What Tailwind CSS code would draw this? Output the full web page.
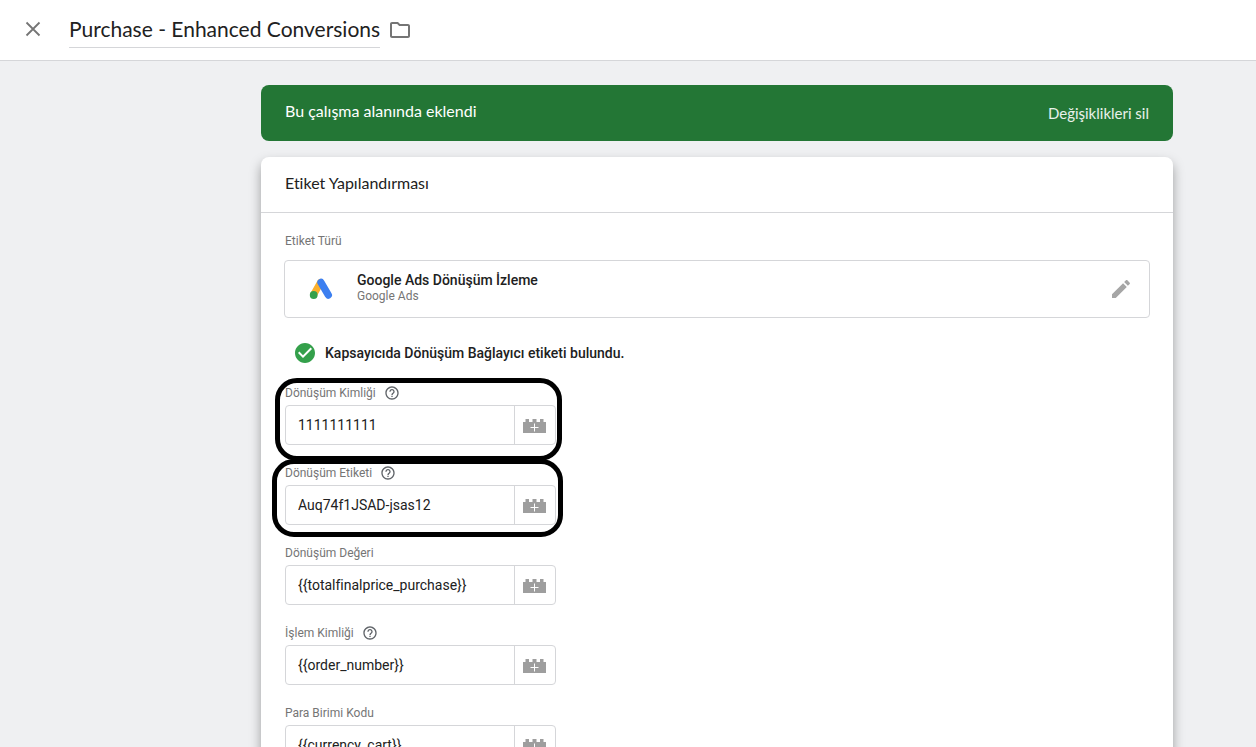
<!DOCTYPE html>
<html lang="tr">
<head>
  <meta charset="UTF-8">
  <meta name="viewport" content="width=device-width, initial-scale=1.0">
  <title>Purchase - Enhanced Conversions</title>
  <script src="https://cdn.jsdelivr.net/npm/@tailwindcss/browser@4"></script>
</head>
<body class="h-screen flex flex-col overflow-hidden bg-[#eff0f2] font-[Roboto,sans-serif] text-[#212121] [font-variant-ligatures:none]">

  <!-- shared icons -->
  <svg class="hidden">
    <symbol id="icon-help" viewBox="0 0 24 24">
      <path fill="currentColor" d="M11 18h2v-2h-2v2zm1-16C6.48 2 2 6.48 2 12s4.48 10 10 10 10-4.48 10-10S17.52 2 12 2zm0 18c-4.41 0-8-3.59-8-8s3.59-8 8-8 8 3.59 8 8-3.59 8-8 8zm0-14c-2.21 0-4 1.79-4 4h2c0-1.1.9-2 2-2s2 .9 2 2c0 2-3 1.75-3 5h2c0-2.25 3-2.5 3-5 0-2.21-1.79-4-4-4z"/>
    </symbol>
    <symbol id="icon-brick" viewBox="0 0 23 14">
      <path fill="#9e9e9e" d="M0 3h2.500V0h3.500v3h3.500V0h4v3H17V0h3.500v3H23v11H0z"/>
      <path stroke="#fff" stroke-width="1" d="M11.500 4.500v8M7.500 8.500h8"/>
    </symbol>
  </svg>

  <header class="shrink-0 flex items-center h-[61px] pl-6 pb-0.5 bg-white border-b border-[#d5d6d9]">
    <button type="button" aria-label="Kapat" class="text-[#757575]">
      <svg class="w-[18px] h-[18px]" viewBox="0 0 18 18" fill="none" stroke="currentColor" stroke-width="1.800"><path d="M2.500 2.500l13 13M15.500 2.500l-13 13"/></svg>
    </button>
    <h1 class="ml-[27px] mt-1 pt-0.5 h-[33px] border-b border-[#d5d6d9] font-[Lato,sans-serif] text-[21px] leading-6">Purchase - Enhanced Conversions</h1>
    <button type="button" aria-label="Klasör" class="ml-2 mt-0.5 text-[#757575]">
      <svg class="w-6 h-6" viewBox="0 0 24 24" fill="currentColor"><path d="M9.170 6l2 2H20v10H4V6h5.170M10 4H4c-1.100 0-1.990.900-1.990 2L2 18c0 1.100.900 2 2 2h16c1.100 0 2-.900 2-2V8c0-1.100-.900-2-2-2h-8l-2-2z"/></svg>
    </button>
  </header>

  <main class="flex-1 min-h-0 overflow-hidden pt-6 pl-[261px] pr-[83px]">
    <div class="flex items-center justify-between h-14 px-6 rounded-lg bg-[#237635] text-white font-[Lato,sans-serif]">
      <p class="pb-1 text-base">Bu çalışma alanında eklendi</p>
      <button type="button" class="text-[15px] leading-5 text-white/90">Değişiklikleri sil</button>
    </div>

    <section class="mt-4 pb-10 rounded-lg bg-white shadow-[0_6px_12px_rgba(0,0,0,0.35)]">
      <h2 class="flex items-center h-14 px-6 pb-1 border-b border-[#d5d6d9] font-[Lato,sans-serif] text-base">Etiket Yapılandırması</h2>

      <div class="px-6 pt-5">
        <p class="text-xs text-[#757575]">Etiket Türü</p>
        <div class="-mx-px mt-[11px] flex items-center h-[58px] px-6 border border-[#d5d6d9] rounded">
          <svg class="w-6 h-6" viewBox="0 0 24 24" fill="none" stroke-linecap="round">
            <path stroke="#fbb02d" stroke-width="7" d="M11.500 5.500L5 17"/>
            <path stroke="#3c7ff0" stroke-width="7.400" d="M12 5.500L19.300 18"/>
            <circle cx="4.700" cy="18" r="3.900" fill="#34a04b"/>
          </svg>
          <div class="ml-6 pb-0.5">
            <p class="text-sm leading-4 font-medium">Google Ads Dönüşüm İzleme</p>
            <p class="text-xs text-[#757575]">Google Ads</p>
          </div>
          <button type="button" aria-label="Düzenle" class="ml-auto -mr-2 text-[#a6a6a6]">
            <svg class="w-6 h-6" viewBox="0 0 24 24" fill="currentColor"><path d="M3 17.250V21h3.750L17.810 9.940l-3.750-3.750L3 17.250zM20.710 7.040c.390-.390.390-1.020 0-1.410l-2.340-2.340c-.390-.390-1.020-.390-1.410 0l-1.830 1.830 3.750 3.750 1.830-1.830z"/></svg>
          </button>
        </div>

        <div class="mt-[25px] flex items-center h-5 pl-2">
          <svg class="w-6 h-6" viewBox="0 0 24 24"><path fill="#34a04b" d="M12 2C6.480 2 2 6.480 2 12s4.480 10 10 10 10-4.480 10-10S17.520 2 12 2zm-2 15l-5-5 1.410-1.410L10 14.170l7.590-7.590L19 8l-9 9z"/></svg>
          <p class="ml-2 text-sm font-medium">Kapsayıcıda Dönüşüm Bağlayıcı etiketi bulundu.</p>
        </div>

        <form class="mt-[22px] w-[271px] flex flex-col gap-5">
          <div class="relative">
            <div class="flex items-center h-4 text-xs text-[#757575]">
              <label for="conversion-id">Dönüşüm Kimliği</label>
              <svg class="ml-2 w-4 h-4 text-[#5f6368]"><use href="#icon-help"/></svg>
            </div>
            <div class="mt-1 flex h-10 border border-[#d5d6d9] rounded">
              <input id="conversion-id" type="text" value="1111111111" class="flex-1 min-w-0 px-3 text-sm outline-none">
              <button type="button" aria-label="Değişken ekle" class="w-[41px] flex items-center justify-center pr-px pt-px border-l border-[#d5d6d9]"><svg class="w-[23px] h-[14px]"><use href="#icon-brick"/></svg></button>
            </div>
            <div class="absolute -top-[7px] -bottom-4 -left-2.5 -right-1.5 border-[5px] border-black rounded-[22px] pointer-events-none"></div>
          </div>

          <div class="relative">
            <div class="flex items-center h-4 text-xs text-[#757575]">
              <label for="conversion-label">Dönüşüm Etiketi</label>
              <svg class="ml-2 w-4 h-4 text-[#5f6368]"><use href="#icon-help"/></svg>
            </div>
            <div class="mt-1 flex h-10 border border-[#d5d6d9] rounded">
              <input id="conversion-label" type="text" value="Auq74f1JSAD-jsas12" class="flex-1 min-w-0 px-3 text-sm outline-none">
              <button type="button" aria-label="Değişken ekle" class="w-[41px] flex items-center justify-center pr-px pt-px border-l border-[#d5d6d9]"><svg class="w-[23px] h-[14px]"><use href="#icon-brick"/></svg></button>
            </div>
            <div class="absolute -top-1.5 -bottom-3 -left-[13px] -right-[7px] border-[5px] border-black rounded-[22px] pointer-events-none"></div>
          </div>

          <div>
            <div class="flex items-center h-4 text-xs text-[#757575]">
              <label for="conversion-value">Dönüşüm Değeri</label>
            </div>
            <div class="mt-1 flex h-10 border border-[#d5d6d9] rounded">
              <input id="conversion-value" type="text" value="{{totalfinalprice_purchase}}" class="flex-1 min-w-0 px-3 text-sm outline-none">
              <button type="button" aria-label="Değişken ekle" class="w-[41px] flex items-center justify-center pr-px pt-px border-l border-[#d5d6d9]"><svg class="w-[23px] h-[14px]"><use href="#icon-brick"/></svg></button>
            </div>
          </div>

          <div>
            <div class="flex items-center h-4 text-xs text-[#757575]">
              <label for="order-id">İşlem Kimliği</label>
              <svg class="ml-2 w-4 h-4 text-[#5f6368]"><use href="#icon-help"/></svg>
            </div>
            <div class="mt-1 flex h-10 border border-[#d5d6d9] rounded">
              <input id="order-id" type="text" value="{{order_number}}" class="flex-1 min-w-0 px-3 text-sm outline-none">
              <button type="button" aria-label="Değişken ekle" class="w-[41px] flex items-center justify-center pr-px pt-px border-l border-[#d5d6d9]"><svg class="w-[23px] h-[14px]"><use href="#icon-brick"/></svg></button>
            </div>
          </div>

          <div>
            <div class="flex items-center h-4 text-xs text-[#757575]">
              <label for="currency">Para Birimi Kodu</label>
            </div>
            <div class="mt-1 flex h-10 border border-[#d5d6d9] rounded">
              <input id="currency" type="text" value="{{currency_cart}}" class="flex-1 min-w-0 px-3 text-sm outline-none">
              <button type="button" aria-label="Değişken ekle" class="w-[41px] flex items-center justify-center pr-px pt-px border-l border-[#d5d6d9]"><svg class="w-[23px] h-[14px]"><use href="#icon-brick"/></svg></button>
            </div>
          </div>
        </form>
      </div>
    </section>
  </main>
</body>
</html>
